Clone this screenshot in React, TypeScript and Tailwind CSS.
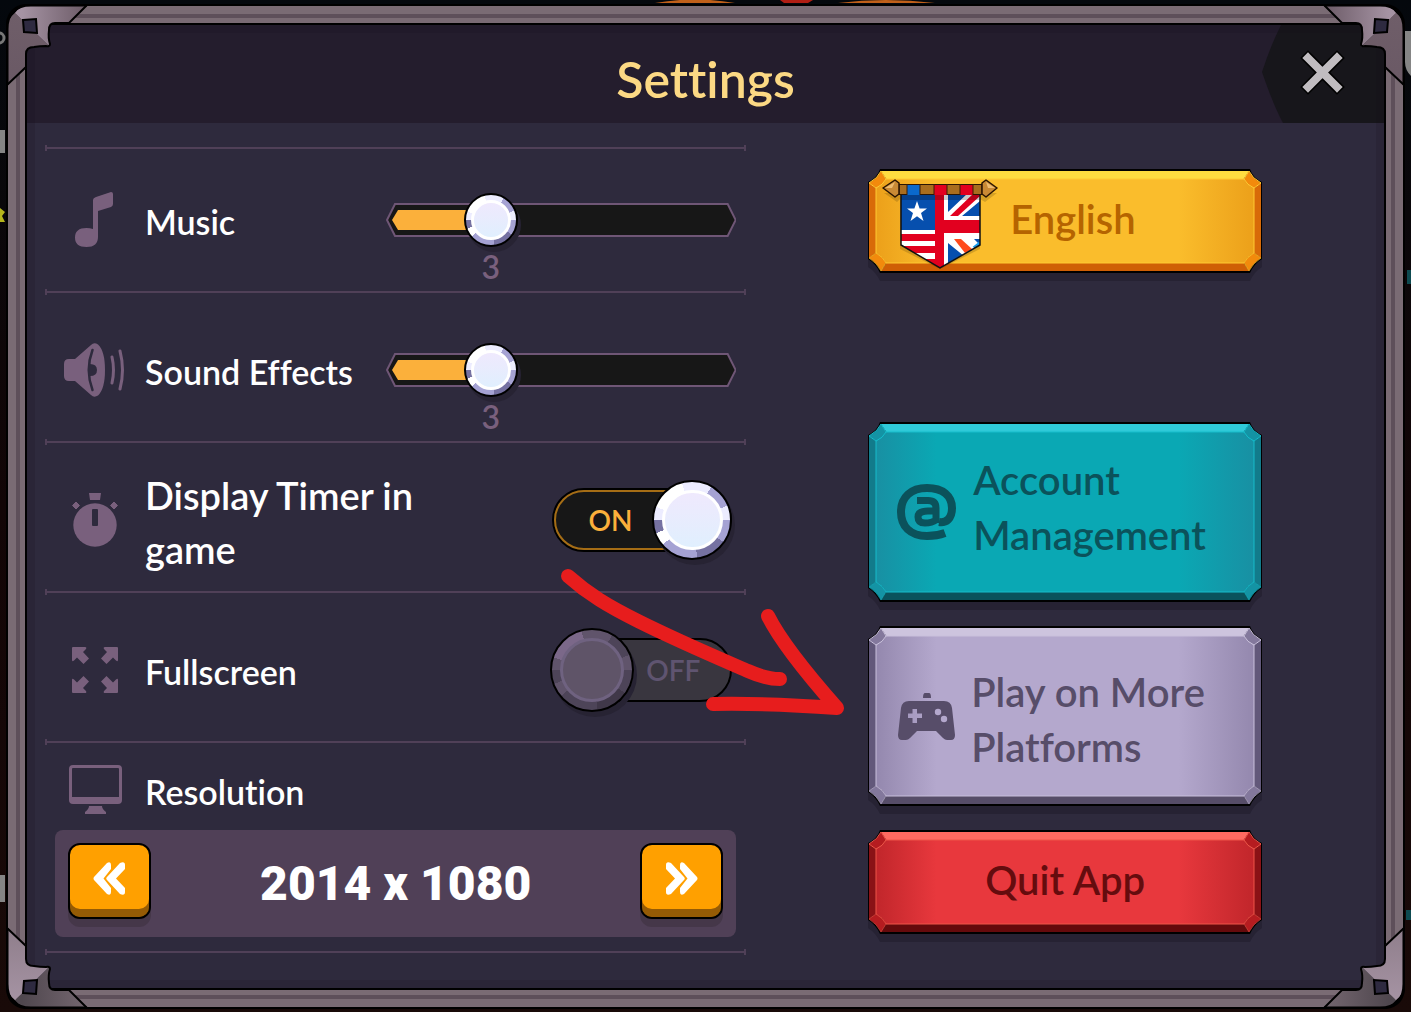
import { useState, type ReactNode } from "react";

const bevelThemes = {
  gold: { face: "#fabd2c", edge: "#eca01a", top: "#ffdd40", bottom: "#cf5f05", side: "#d86a08", gem: "#f28a0c", line: "#ffc933" },
  teal: { face: "#0aa8b4", edge: "#1890a3", top: "#2fc9d8", bottom: "#0a525c", side: "#127b8b", gem: "#1493a4", line: "#16bccb" },
  lilac: { face: "#b4a8cd", edge: "#9488ae", top: "#cdc4de", bottom: "#564d68", side: "#62587a", gem: "#83789c", line: "#c9c0dc" },
  red: { face: "#e8383d", edge: "#c1262b", top: "#ff6a60", bottom: "#650a0c", side: "#8a1216", gem: "#b51c20", line: "#ee5548" },
};

type Theme = keyof typeof bevelThemes;

function BevelButton({ theme, height, className, children }: { theme: Theme; height: number; className: string; children: ReactNode }) {
  const t = bevelThemes[theme];
  const h = height;
  const outline = `M13 0H383Q386 9 395 13V${h - 14}Q387 ${h - 9} 383 ${h}H13Q9 ${h - 9} 1 ${h - 14}V13Q10 9 13 0Z`;
  return (
    <button type="button" className={`relative isolate flex w-full max-w-[396px] items-center ${className}`}>
      <svg className="absolute inset-0 -z-10 h-full w-full overflow-visible" viewBox={`0 0 396 ${h}`} preserveAspectRatio="none" aria-hidden="true">
        <defs>
          <linearGradient id={`face-${theme}`}>
            <stop offset="0" stopColor={t.edge} />
            <stop offset="0.16" stopColor={t.face} />
            <stop offset="0.8" stopColor={t.face} />
            <stop offset="1" stopColor={t.edge} />
          </linearGradient>
        </defs>
        <path d={outline} transform="translate(0 8)" fill="#262233" />
        <path d={outline} fill="#000" />
        <path d={`M14 2H382L376 11H20Z`} fill={t.top} />
        <path d={`M14 ${h - 2}H382L376 ${h - 11}H20Z`} fill={t.bottom} />
        <path d={`M2 14L9 19V${h - 20}L2 ${h - 15}Z`} fill={t.side} />
        <path d={`M394 14L387 19V${h - 20}L394 ${h - 15}Z`} fill={t.side} />
        <path d={`M19 10H377Q380 16 387 19V${h - 20}Q380 ${h - 16} 377 ${h - 10}H19Q16 ${h - 16} 9 ${h - 20}V19Q16 16 19 10Z`} fill={`url(#face-${theme})`} stroke={t.line} />
        {["", "translate(396 0) scale(-1 1)"].map((flip) => (
          <g key={flip} transform={flip} stroke={t.line} strokeWidth="1">
            <path d="M14 2L19 10Q16 16 9 19L2 14Q11 9 14 2Z" fill={t.gem} />
            <path d={`M14 ${h - 2}L19 ${h - 10}Q16 ${h - 16} 9 ${h - 20}L2 ${h - 15}Q10 ${h - 10} 14 ${h - 2}Z`} fill={t.gem} strokeOpacity="0.6" />
          </g>
        ))}
      </svg>
      {children}
    </button>
  );
}

// One metal corner of the frame; the other three are mirrored copies.
function Corner({ id, className, across, down }: { id: string; className: string; across: [string, string]; down: [string, string] }) {
  return (
    <svg className={`pointer-events-none absolute h-[84px] w-[84px] ${className}`} viewBox="0 0 84 84" aria-hidden="true">
      <defs>
        <linearGradient id={`${id}-across`}>
          <stop offset="0.1" stopColor={across[0]} />
          <stop offset="1" stopColor={across[1]} />
        </linearGradient>
        <linearGradient id={`${id}-down`} x2="0" y2="1">
          <stop offset="0" stopColor={down[0]} />
          <stop offset="1" stopColor={down[1]} />
        </linearGradient>
      </defs>
      <path d="M9 9Q15 1 25 1H81L64 19H50Q43 19 43 26V36L44 43Z" fill={`url(#${id}-across)`} />
      <path d="M9 9Q1 15 1 25V81L20 64V51Q20 43 27 43H44Z" fill={`url(#${id}-down)`} />
      <path d="M81 1L63 19H49Q43 19 43 26Q42 34 44 40Q44 43 40 42Q34 42 28 43Q20 43 20 50V63L1 81" fill="none" stroke="#000" strokeWidth="2" />
      <path d="M81 1H25Q1 1 1 25V81" fill="none" stroke="#000" strokeWidth="3" />
      <path d="M17 16L30 15L31 29L18 28Z" fill="#2e2a40" stroke="#000" strokeWidth="2" />
    </svg>
  );
}

function Rule() {
  return (
    <div className="flex h-1.5 items-center border-x-2 border-[#504058]">
      <div className="h-0.5 w-full bg-[#504058]" />
    </div>
  );
}

function Knob({ dim, className }: { dim?: boolean; className: string }) {
  const ring = dim
    ? "bg-[conic-gradient(#60546b_0_30deg,#4d4458_30deg_68deg,#60546b_68deg_90deg,#4d4458_90deg_125deg,#403849_125deg_172deg,#4d4458_172deg_230deg,#60546b_230deg_250deg,#4d4458_250deg_270deg,#60546b_270deg_288deg,#7b6889_288deg_345deg,#60546b_345deg)]"
    : "bg-[conic-gradient(#ececff_0_30deg,#a5a2d3_30deg_68deg,#ececff_68deg_90deg,#a5a2d3_90deg_125deg,#7672a2_125deg_172deg,#a5a2d3_172deg_230deg,#fff_230deg_250deg,#7672a2_250deg_270deg,#ececff_270deg_290deg,#fff_290deg_345deg,#ececff_345deg)]";
  const face = dim ? "border-[#6f6280] bg-[#5f5468]" : "border-white bg-linear-to-b from-[#efe9fd] to-[#e0effe]";
  return (
    <span className={`pointer-events-none absolute rounded-full border-2 border-black shadow-[3px_5px_0_#272333] ${ring} ${className}`}>
      <span className={`absolute inset-[10%] rounded-full border-3 ${face}`} />
    </span>
  );
}

function Slider({ id, label }: { id: string; label: string }) {
  const [value, setValue] = useState(3);
  return (
    <div className="relative mr-2.5 h-[34px] w-1/2">
      <svg className="h-full w-full" viewBox="0 0 350 34" preserveAspectRatio="none" aria-hidden="true">
        <path d="M9 1H341L349 17L341 33H9L1 17Z" fill="#171717" stroke="#6f5676" strokeWidth="2" />
        {value > 0 && <path d={`M12 7H${value * 35}V27H12L6 17Z`} fill="#fbb03b" />}
      </svg>
      <div className="pointer-events-none absolute inset-y-0 w-0" style={{ left: `${value * 10}%` }}>
        <Knob className="top-[-10px] -left-[27px] h-[54px] w-[54px]" />
        <output htmlFor={id} className="absolute top-11 -left-5 w-10 text-center text-[32px] leading-10 text-[#79607d]">
          {value}
        </output>
      </div>
      <input
        id={id}
        type="range"
        min="0"
        max="10"
        value={value}
        aria-label={label}
        onChange={(e) => setValue(Number(e.target.value))}
        className="absolute inset-0 h-full w-full cursor-pointer opacity-0"
      />
    </div>
  );
}

function Toggle({ id, initial }: { id: string; initial: boolean }) {
  const [on, setOn] = useState(initial);
  return (
    <div className="relative mr-3.5 h-16 w-[180px]">
      <div className={`h-full w-full rounded-full border-2 border-black text-[28px] ${on ? "bg-[#171717] text-[#fbb03b]" : "bg-[#39363f] text-[#5f5470]"}`}>
        <div className={`flex h-full w-full items-center rounded-full border-2 ${on ? "border-[#a56d15] pl-8" : "justify-end border-transparent pr-7"}`}>
          {on ? "ON" : "OFF"}
        </div>
      </div>
      {on ? <Knob className="-top-2 right-0 h-20 w-20" /> : <Knob dim className="-top-2.5 -left-0.5 h-[84px] w-[84px]" />}
      <input
        id={id}
        type="checkbox"
        role="switch"
        checked={on}
        onChange={() => setOn(!on)}
        className="absolute inset-0 h-full w-full cursor-pointer opacity-0"
      />
    </div>
  );
}

function MusicIcon() {
  return (
    <svg width="40" height="56" viewBox="0 0 40 56" fill="#79607d" aria-hidden="true">
      <path d="M18 8Q18 6 21 5L36 0Q38 0 38 2V12Q38 14 36 15L23 19V45Q23 55 11.500 55Q0 55 0 45.500Q0 36 11.500 36Q15 36 18 37Z" />
    </svg>
  );
}

function SpeakerIcon() {
  return (
    <svg width="62" height="54" viewBox="0 0 62 54" fill="#79607d" aria-hidden="true">
      <path d="M11 16L27 2Q30 -1 34 1.500Q41 8 41 27Q41 46 34 52.500Q30 55 27 52L11 38H5Q0 38 0 33V21Q0 16 5 16Z" />
      <path d="M28.500 7Q21 27 28.500 47" fill="none" stroke="#2e2a3d" strokeWidth="2.500" strokeLinecap="round" />
      <path d="M26 21Q33 21 33 27Q33 33 26 33Z" fill="#2e2a3d" />
      <path d="M48 14Q51 27 48 40M56 8Q61 27 56 46" fill="none" stroke="#79607d" strokeWidth="3" strokeLinecap="round" />
    </svg>
  );
}

function TimerIcon() {
  return (
    <svg width="46" height="54" viewBox="0 0 46 54" fill="#79607d" aria-hidden="true">
      <path d="M17 0H29L28 7H18Z" />
      <path d="M4 9L7.500 12.500L4 16L0.500 12.500ZM42 9L45.500 12.500L42 16L38.500 12.500Z" stroke="#79607d" strokeLinejoin="round" />
      <circle cx="23" cy="32" r="21.700" />
      <rect x="20" y="16" width="6" height="17" rx="1" fill="#2e2a3d" />
    </svg>
  );
}

function ExpandIcon() {
  const arrow = "M1 2Q1 1 2 1H14Q16 1 15 3L12 6L18 12.500L12.500 18L6 11.500L3 14.500Q1 16 1 14Z";
  return (
    <svg width="48" height="48" viewBox="0 0 48 48" fill="#79607d" aria-hidden="true">
      <path d={arrow} />
      <path d={arrow} transform="translate(48 0) scale(-1 1)" />
      <path d={arrow} transform="translate(0 48) scale(1 -1)" />
      <path d={arrow} transform="translate(48 48) scale(-1 -1)" />
    </svg>
  );
}

function MonitorIcon() {
  return (
    <svg width="53" height="50" viewBox="0 0 53 50" fill="#79607d" aria-hidden="true">
      <path fillRule="evenodd" d="M4 0H49Q53 0 53 4V35Q53 39 49 39H4Q0 39 0 35V4Q0 0 4 0ZM4 3Q3 3 3 4V32H50V4Q50 3 49 3Z" />
      <path d="M20 41H33Q33 44 37 47V49H16V47Q20 44 20 41Z" />
    </svg>
  );
}

function AtIcon() {
  return (
    <svg className="shrink-0" width="60" height="56" viewBox="0 0 60 56" fill="none" stroke="#0b525b" aria-hidden="true">
      <path d="M48 49Q40 52 30 52C13 52 4 42 4 28C4 13 14 4 30 4C46 4 55 12 55 24C55 35 49 39 42 38" strokeWidth="8" />
      <path d="M20 16.500H31Q39 16.500 39 24V39M39 27H31Q21 27 21 33Q21 39 28 39Q35 39 39 36" strokeWidth="7" />
    </svg>
  );
}

function GamepadIcon() {
  return (
    <svg className="shrink-0" width="57" height="47" viewBox="0 0 57 47" fill="#574d69" aria-hidden="true">
      <path d="M27 0H31Q33 0 33 5H25Q25 0 27 0Z" />
      <path fillRule="evenodd" d="M11 8H46Q53 8 54 15L57 42Q57 47 53 47H49Q47 47 45 45L38 38H19L12 45Q10 47 8 47H4Q0 47 0 42L3 15Q4 8 11 8ZM14.500 16V20.500H10V25H14.500V30H19V25H24V20.500H19V16Z" />
      <circle cx="40" cy="19" r="3.200" fill="#b4a8cd" />
      <circle cx="46" cy="26" r="3.200" fill="#b4a8cd" />
    </svg>
  );
}

function FlagBanner() {
  return (
    <svg className="mt-1.5 shrink-0" width="116" height="90" viewBox="0 0 116 90" aria-hidden="true">
      <defs>
        <clipPath id="pennant">
          <path d="M19 15H98V66L58 89L19 66Z" />
        </clipPath>
      </defs>
      <path d="M2 14L15 23L18 20V70L58 90L98 70V20L103 23L115 14Z" fill="#000" opacity="0.15" />
      <g clipPath="url(#pennant)">
        <rect x="18" y="14" width="81" height="76" fill="#fff" />
        <path d="M18 14H53V51H18Z" fill="#064fae" />
        <path d="M18 55H53V62H18ZM18 67H53V74H18ZM18 80H53V90H18Z" fill="#e2001f" />
        <path d="M66 14H86L66 33ZM98 22V37H80ZM66 64V90L82 77ZM98 60V66L92 60Z" fill="#064fae" />
        <path d="M64 89L98 62V74Z" fill="#139cf0" />
        <path d="M66 62L90 84L98 74L82 60H66Z" fill="#fff" />
        <path d="M68 37L92 14H98V17L76 37Z" fill="#e2001f" />
        <path d="M72 60H79L90 70L83 74Z" fill="#ff4a1c" />
        <path d="M53 14H62V41H98V54H62V90H53Z" fill="#e2001f" />
        <path d="M18 15H99V21H18Z" fill="#000" opacity="0.2" />
      </g>
      <path d="M19 15V66L58 89L98 66V15" fill="none" stroke="#111" strokeWidth="1.500" />
      <path d="M35 22L37.600 29.500L45 29.500L39 34L41.500 42L35 37.300L28.500 42L31 34L25 29.500L32.400 29.500Z" fill="#fff" />
      <rect x="17" y="5.500" width="83" height="10" fill="#a86d1e" stroke="#2a1502" />
      <rect x="25" y="6" width="13" height="10" fill="#0a69cc" />
      <path d="M52 6H65V16H52ZM78 6H91V16H78Z" fill="#e2001f" />
      <path d="M25 5V16M38 5V16M52 5V16M65 5V16M78 5V16M91 5V16" stroke="#3a1d03" />
      <path d="M1 9L13 1L17 4V15L13 18ZM115 9L104 1L100 4V15L104 18Z" fill="#c98a35" stroke="#2a1502" strokeWidth="1.500" strokeLinejoin="round" />
      <path d="M3 9L13 3L10 9ZM113 9L104 3L106 9Z" fill="#eebc70" />
    </svg>
  );
}

function StepButton({ label, flip }: { label: string; flip?: boolean }) {
  return (
    <button
      type="button"
      aria-label={label}
      className="mb-1.5 flex h-[76px] w-[83px] items-center justify-center rounded-xl border-2 border-black bg-[#ffa000] pb-1 shadow-[inset_0_-8px_0_#955b05,0_8px_0_#453749]"
    >
      <svg className={flip ? "-scale-x-100" : ""} width="33" height="34" viewBox="0 0 33 34" fill="#fff" aria-hidden="true">
        <path d="M1 15L14 1Q18 -1 18 3V7L10.500 16.500L18 26V30Q18 34 14 32L1 18Q0 16.500 1 15Z" />
        <path d="M14 15L27 1Q32 -1 32 3V7L23 16.500L32 26V30Q32 34 27 32L14 18Q12.500 16.500 14 15Z" />
      </svg>
    </button>
  );
}

function SettingRow({ icon, label, htmlFor, large, className, children }: { icon: ReactNode; label: string; htmlFor: string; large?: boolean; className: string; children: ReactNode }) {
  return (
    <div className={`flex items-center ${className}`}>
      <div className="flex w-[100px] shrink-0 justify-center">{icon}</div>
      <div className="flex-1 pt-1">
        <label htmlFor={htmlFor} className={`block max-w-[300px] leading-[54px] text-white ${large ? "text-[38px]" : "text-[34px] whitespace-nowrap"}`}>
          {label}
        </label>
      </div>
      {children}
    </div>
  );
}

export default function App() {
  return (
    <div className="relative flex min-h-screen flex-col overflow-hidden bg-linear-to-b from-[#04080d] via-[#120506] to-[#190a08] px-1.5 pt-1 pb-[3px] font-['Lato',sans-serif] font-semibold [font-variant-ligatures:none]">
      {/* slivers of the game behind the window */}
      <svg className="absolute inset-0 h-full w-full" aria-hidden="true">
        <path d="M655 3Q695 -4 735 3ZM838 3Q885 -3 935 3Z" fill="#c0601a" />
        <path d="M780 0H813L808 3H784Z" fill="#b01e14" />
        <circle cx="-1" cy="38" r="5" fill="none" stroke="#777" strokeWidth="3" />
        <path d="M0 130H5V153H0ZM0 875H5V902H0ZM1405 31H1411V76Q1405 70 1405 62Z" fill="#858585" />
        <path d="M0 208L5 212L2 216L5 222H0Z" fill="#b5b51c" />
        <path d="M1407 270H1411V284H1407ZM1406 910H1411V920H1406Z" fill="#0d4a50" />
      </svg>

      <div className="relative flex flex-1 rounded-[26px] border-2 border-black bg-[#7a6b74] p-2">
        <div className="flex flex-1 border-4 border-[#5e4f5a] bg-[#7a6b74] p-[5px]">
          <main className="relative flex flex-1 flex-col border-2 border-black bg-[#2e2a3d]">
            <header className="grid h-[98px] grid-cols-[122px_1fr_122px] bg-[#241d2d]">
              <h1 className="col-start-2 self-center pt-2.5 text-center text-[50px] leading-[60px] text-[#fcd984]">Settings</h1>
              <button type="button" aria-label="Close">
                <svg className="block h-full w-full" viewBox="0 0 122 98" aria-hidden="true">
                  <path d="M19 0H122V98H21Q12 82 0 47Q8 22 19 0Z" fill="#17161b" />
                  <path d="M46 33L75 62M75 33L46 62" stroke="#000" strokeWidth="11" strokeLinecap="square" strokeLinejoin="round" />
                  <path d="M46 33L75 62M75 33L46 62" stroke="#c0bcc0" strokeWidth="8" strokeLinecap="square" />
                </svg>
              </button>
            </header>

            <div className="grid grid-cols-[11fr_10fr] pl-[18px]">
              <section className="flex flex-col pt-[22px]">
                <Rule />
                <SettingRow icon={<MusicIcon />} label="Music" htmlFor="music" className="h-[138px]">
                  <Slider id="music" label="Music" />
                </SettingRow>
                <Rule />
                <SettingRow icon={<SpeakerIcon />} label="Sound Effects" htmlFor="effects" className="h-36 pt-1.5">
                  <Slider id="effects" label="Sound Effects" />
                </SettingRow>
                <Rule />
                <SettingRow large icon={<TimerIcon />} label="Display Timer in game" htmlFor="timer" className="h-36 pt-1.5">
                  <Toggle id="timer" initial={true} />
                </SettingRow>
                <Rule />
                <SettingRow icon={<ExpandIcon />} label="Fullscreen" htmlFor="fullscreen" className="h-36 pt-1.5">
                  <Toggle id="fullscreen" initial={false} />
                </SettingRow>
                <Rule />
                <div className="flex h-[85px] items-center pt-1">
                  <div className="flex w-[100px] justify-center">
                    <MonitorIcon />
                  </div>
                  <h2 className="pt-1 text-[34px] leading-[54px] text-white">Resolution</h2>
                </div>
                <div className="mx-2.5 mb-3 flex h-[107px] items-center justify-between rounded-lg bg-[#504057] px-[13px]">
                  <StepButton label="Previous resolution" />
                  <span className="font-['Roboto',sans-serif] text-5xl font-black text-white">2014 x 1080</span>
                  <StepButton label="Next resolution" flip />
                </div>
                <Rule />
              </section>

              <section className="flex flex-col items-center gap-6 pt-[46px]">
                <BevelButton theme="gold" height={104} className="mb-[125px] h-[104px] gap-3 pl-[15px] text-[40px] text-[#b56400]">
                  <FlagBanner />
                  <span className="pb-1">English</span>
                </BevelButton>
                <BevelButton theme="teal" height={180} className="h-[180px] gap-4 pl-[30px] text-left text-[40px] leading-[55px] text-[#0b525b]">
                  <AtIcon />
                  <span className="max-w-[260px] pb-2">Account Management</span>
                </BevelButton>
                <BevelButton theme="lilac" height={180} className="h-[180px] gap-4 pl-[31px] text-left text-[40px] leading-[55px] text-[#574d69]">
                  <GamepadIcon />
                  <span className="max-w-[260px] pt-2">Play on More Platforms</span>
                </BevelButton>
                <BevelButton theme="red" height={104} className="h-[104px] justify-center pb-1 text-[40px] text-[#650c0e]">
                  Quit App
                </BevelButton>
              </section>
            </div>

            <div className="pointer-events-none absolute inset-0 shadow-[inset_0_0_0_8px_rgba(20,15,30,0.15)]" />

            <svg className="pointer-events-none absolute top-[541px] left-[531px]" width="300" height="160" viewBox="0 0 300 160" fill="none" stroke="#e71d1d" strokeWidth="14" strokeLinecap="round" strokeLinejoin="round" aria-hidden="true">
              <path d="M10 10C30 28 50 40 80 55C120 75 160 92 190 105Q208 113 222 113" />
              <path d="M210 50Q226 82 279 142Q210 137 155 138" />
            </svg>
          </main>
        </div>

        <Corner id="tl" className="-top-0.5 -left-0.5" across={["#a593a3", "#6c5b67"]} down={["#6f5e69", "#6a5965"]} />
        <Corner id="tr" className="-top-0.5 -right-0.5 -scale-x-100" across={["#a593a3", "#6c5b67"]} down={["#6f5e69", "#6a5965"]} />
        <Corner id="bl" className="-bottom-0.5 -left-0.5 -scale-y-100" across={["#4f474e", "#756770"]} down={["#a593a3", "#8f7e8b"]} />
        <Corner id="br" className="-right-0.5 -bottom-0.5 -scale-100" across={["#4f474e", "#756770"]} down={["#a593a3", "#8f7e8b"]} />
      </div>
    </div>
  );
}
